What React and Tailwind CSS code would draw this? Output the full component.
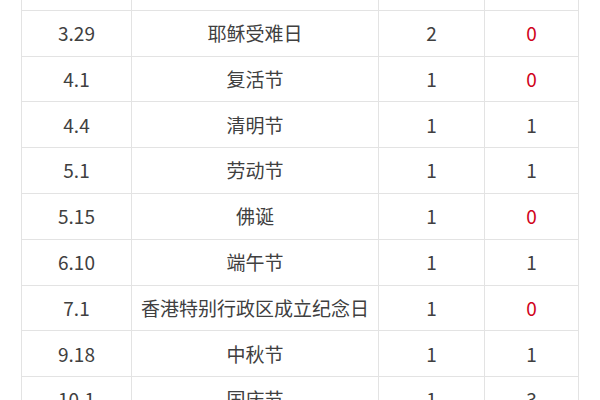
export default function App() {
  const rows = [
    ["", "", "1", "1"],
    ["3.29", "耶稣受难日", "2", "0"],
    ["4.1", "复活节", "1", "0"],
    ["4.4", "清明节", "1", "1"],
    ["5.1", "劳动节", "1", "1"],
    ["5.15", "佛诞", "1", "0"],
    ["6.10", "端午节", "1", "1"],
    ["7.1", "香港特别行政区成立纪念日", "1", "0"],
    ["9.18", "中秋节", "1", "1"],
    ["10.1", "国庆节", "1", "3"],
  ];
  return (
    <div
      className="w-[600px] h-[400px] overflow-hidden bg-white"
      style={{ fontFamily: '"Noto Sans CJK SC", "Noto Sans", sans-serif' }}
    >
      <table className="ml-[21px] -mt-[36px] border-collapse table-fixed text-[19px] text-[#404040]">
        <tbody>
          {rows.map((r, i) => (
            <tr key={i} className="h-[45.8px]">
              <td className="w-[110px] border border-[#e3e3e3] text-center p-0">{r[0]}</td>
              <td className="w-[247px] border border-[#e3e3e3] text-center p-0 whitespace-nowrap">{r[1]}</td>
              <td className="w-[106px] border border-[#e3e3e3] text-center p-0">{r[2]}</td>
              <td
                className={
                  "w-[94px] border border-[#e3e3e3] text-center p-0 " +
                  (r[3] === "0" ? "text-[#d0021b]" : "")
                }
              >
                {r[3]}
              </td>
            </tr>
          ))}
        </tbody>
      </table>
    </div>
  );
}
